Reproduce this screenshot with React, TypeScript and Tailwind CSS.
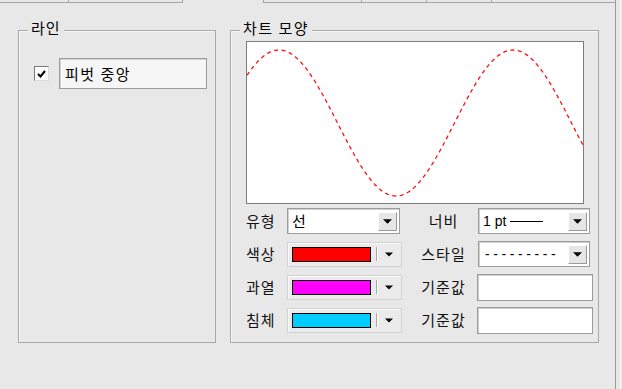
import React from "react";

function Arrow({ small = false }: { small?: boolean }) {
  return (
    <svg width={small ? 8 : 9} height={small ? 5 : 5} viewBox="0 0 8 4" className="block">
      <polygon points="0,0 8,0 4,4" fill="#000" />
    </svg>
  );
}

function ArrowButton() {
  return (
    <div className="w-[19px] h-[19px] flex items-center justify-center bg-[#e6e6e6] border border-t-white border-l-white border-b-[#9a9a9a] border-r-[#9a9a9a]">
      <Arrow />
    </div>
  );
}

function Combo({ w, children }: { w: string; children: React.ReactNode }) {
  return (
    <div
      className={`${w} h-[26px] flex items-center bg-white border border-[#9c9c9c] shadow-[inset_1px_1px_0_#d0d0d0] pl-[4px] pr-[2px]`}
    >
      <div className="flex-1 flex items-center overflow-hidden">{children}</div>
      <ArrowButton />
    </div>
  );
}

function ColorPick({ color }: { color: string }) {
  return (
    <div className="w-[115px] h-[25px] flex items-center border border-[#d2d2d2] bg-[#ebebeb] shadow-[inset_1px_1px_0_#fafafa]">
      <div className={`ml-[4px] w-[79px] h-[15px] border border-black ${color}`} />
      <div className="ml-[5px] h-[14px] w-px bg-[#a8a8a8]" />
      <div className="h-[14px] w-px bg-white" />
      <div className="ml-[7px]">
        <Arrow small />
      </div>
    </div>
  );
}

function TextBox() {
  return (
    <div className="w-[116px] h-[27px] bg-white border border-[#9c9c9c] shadow-[inset_1px_1px_0_#d0d0d0]" />
  );
}

function Label({ children, w }: { children: React.ReactNode; w: string }) {
  return <div className={`${w} text-[15px] leading-[20px] tracking-[1px] text-[#111] whitespace-nowrap`}>{children}</div>;
}

function Wave() {
  const pts: string[] = [];
  for (let x = 0; x <= 336; x += 1) {
    const y = 81 - 73 * Math.cos((2 * Math.PI * (x - 32)) / 234);
    pts.push(`${x},${y.toFixed(2)}`);
  }
  return (
    <svg width={336} height={161} className="block">
      <polyline points={pts.join(" ")} fill="none" stroke="#ff1010" strokeWidth={1.3} strokeDasharray="4 3.5" />
    </svg>
  );
}

export default function App() {
  return (
    <div className="w-[622px] h-[389px] bg-[#e8e8e8] overflow-hidden flex font-['Noto_Sans_CJK_KR','Liberation_Sans',sans-serif] text-black">
      <div className="w-[615px] flex flex-col">
        {/* tab strip remnants */}
        <div className="h-[3px] flex">
          <div className="w-[69px] border-b border-r border-[#a6a6a6]" />
          <div className="w-[114px] border-b border-r border-[#a6a6a6]" />
          <div className="w-[80px]" />
          <div className="w-[98px] border-b border-l border-[#a6a6a6]" />
          <div className="w-[65px] border-b border-l border-[#a6a6a6]" />
          <div className="w-[65px] border-b border-l border-[#a6a6a6]" />
          <div className="flex-1 border-b border-l border-[#a6a6a6]" />
        </div>

        <div className="flex pl-[18px] pt-[27px] gap-[14px]">
          {/* 라인 group */}
          <div className="relative w-[198px] h-[313px] border border-[#a9a9a9] shadow-[inset_1px_1px_0_#f6f6f6]">
            <span className="absolute -top-[13px] left-[9px] px-[3px] bg-[#e8e8e8] text-[15px] leading-[20px] tracking-[1px]">
              라인
            </span>
            <div className="flex items-center pl-[15px] pt-[27px] gap-[10px]">
              <div className="w-[15px] h-[15px] bg-white border border-t-[#7a7a7a] border-l-[#7a7a7a] border-b-[#dcdcdc] border-r-[#dcdcdc] flex items-center justify-center">
                <svg width="9" height="8" viewBox="0 0 9 8" className="block">
                  <polyline points="1,4 3.5,6.5 8,1" fill="none" stroke="#000" strokeWidth="2" />
                </svg>
              </div>
              <div className="w-[148px] h-[31px] bg-[#f6f6f6] border border-[#9c9c9c] shadow-[inset_1px_1px_0_#d4d4d4] flex items-center pl-[5px] text-[15px] leading-[20px] tracking-[1.5px]">
                피벗 중앙
              </div>
            </div>
          </div>

          {/* 차트 모양 group */}
          <div className="relative w-[369px] h-[313px] border border-[#a9a9a9] shadow-[inset_1px_1px_0_#f6f6f6]">
            <span className="absolute -top-[13px] left-[9px] px-[3px] bg-[#e8e8e8] text-[15px] leading-[20px] tracking-[1.5px]">
              차트 모양
            </span>
            <div className="pl-[15px] pt-[10px] flex flex-col">
              <div className="w-[338px] h-[163px] bg-white border border-[#7c7c7c]">
                <Wave />
              </div>
              <div className="mt-[4px] flex flex-col gap-[7px]">
                <div className="flex items-center h-[26px]">
                  <Label w="w-[41px]">유형</Label>
                  <Combo w="w-[113px]">
                    <span className="text-[15px] leading-[20px]">선</span>
                  </Combo>
                  <div className="w-[20px]" />
                  <Label w="w-[47px] text-center">너비</Label>
                  <div className="w-[11px]" />
                  <Combo w="w-[112px]">
                    <span className="font-['Liberation_Sans',sans-serif] text-[14px] leading-[18px]">1 pt</span>
                    <div className="ml-[4px] w-[33px] h-px bg-black" />
                  </Combo>
                </div>
                <div className="flex items-center h-[26px]">
                  <Label w="w-[41px]">색상</Label>
                  <ColorPick color="bg-[#ff0000]" />
                  <div className="w-[18px]" />
                  <Label w="w-[47px] text-center">스타일</Label>
                  <div className="w-[11px]" />
                  <Combo w="w-[112px]">
                    <span className="font-['Liberation_Sans',sans-serif] text-[14px] leading-[18px] tracking-[3.6px] pl-[2px]">
                      ---------
                    </span>
                  </Combo>
                </div>
                <div className="flex items-center h-[26px]">
                  <Label w="w-[41px]">과열</Label>
                  <ColorPick color="bg-[#ff00ff]" />
                  <div className="w-[18px]" />
                  <Label w="w-[47px] text-center">기준값</Label>
                  <div className="w-[10px]" />
                  <TextBox />
                </div>
                <div className="flex items-center h-[26px]">
                  <Label w="w-[41px]">침체</Label>
                  <ColorPick color="bg-[#00ccff]" />
                  <div className="w-[18px]" />
                  <Label w="w-[47px] text-center">기준값</Label>
                  <div className="w-[10px]" />
                  <TextBox />
                </div>
              </div>
            </div>
          </div>
        </div>
      </div>
      <div className="w-px h-full bg-[#9a9a9a]" />
      <div className="w-[4px]" />
      <div className="w-px h-full bg-[#f4f4f4]" />
    </div>
  );
}
